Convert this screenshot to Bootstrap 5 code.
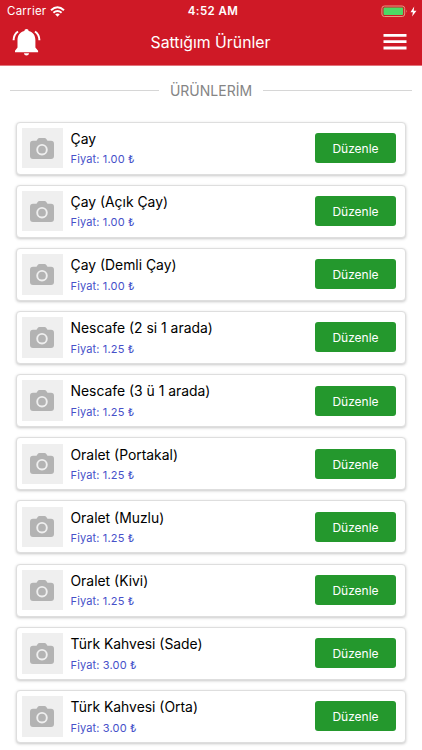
<!DOCTYPE html>
<html lang="tr">
<head>
<meta charset="utf-8">
<meta name="viewport" content="width=device-width, initial-scale=1">
<title>Sattığım Ürünler</title>
<link href="https://cdn.jsdelivr.net/npm/bootstrap@5.3.0/dist/css/bootstrap.min.css" rel="stylesheet">
<style>
body{font-family:Inter,"Liberation Sans",sans-serif;height:750px;overflow:hidden;background:#fff;color:#000}
.topbar{background:#cf1926;height:65.5px;border-bottom:1px solid #e2737b}
.status{height:21px;display:grid;grid-template-columns:1fr auto 1fr;padding:0 5px 0 7px;font-size:11.5px;line-height:21px}
.carrier{letter-spacing:.25px;padding-top:1px}
.clock{font-size:11.5px;font-weight:600;letter-spacing:.4px;padding:1px 0 0 2px}
.appbar{height:44px;display:grid;grid-template-columns:1fr auto 1fr;padding:0 15px 0 12px}
.heading{font-size:15.8px;line-height:44px;padding-left:2px}
.menu-icon{margin-top:-2.5px}
.section-title{height:15px;margin:17px 10px 0;font-size:14px;line-height:15px;color:#858585;gap:10.5px}
.rule{height:1px;background:#d6d6d6}
.items{padding:24px 16px 0;gap:10.17px}
.item{height:53px;border:1px solid #dedede;border-radius:4px;box-shadow:0 1px 3px rgba(0,0,0,.22);padding:0 9px 0 5px}
.thumb{width:40.5px;height:40.5px;background:#efefef}
.name{font-size:13.9px;line-height:20px}
.price{font-size:11px;line-height:16px;letter-spacing:.15px;color:#4651c9;margin-top:2.5px}
.edit{width:81px;height:30px;background:#24982d;color:#fff;font-size:12px;line-height:31px;border-radius:3px;padding:0;border:0}
</style>
<script src="https://cdn.jsdelivr.net/npm/bootstrap@5.3.0/dist/js/bootstrap.bundle.min.js"></script>
</head>
<body>
<svg class="d-none">
  <symbol id="camera" viewBox="0 0 24 21"><path fill="#b3b3b3" d="M3 2.800h3.500l1.200-1.900Q8.300 0 9.500 0h5q1.200 0 1.800.9l1.200 1.900H21q3 0 3 3V18q0 3-3 3H3q-3 0-3-3V5.800q0-3 3-3z"/><circle cx="12" cy="11.700" r="4.800" fill="#b3b3b3" stroke="#efefef" stroke-width="1.900"/></symbol>
</svg>
<header class="topbar text-white">
  <div class="status">
    <div class="d-flex align-items-center"><span class="carrier">Carrier</span>
      <svg class="ms-1" width="15" height="11" viewBox="0 0 15 11" fill="none" stroke="#fff" stroke-width="2"><path d="M1 4.200Q7.500-1.600 14 4.200M3.400 6.700Q7.500 3.200 11.600 6.700"/><path d="M5.200 8.300Q7.500 6.500 9.800 8.300L7.500 10.700z" fill="#fff" stroke="none"/></svg>
    </div>
    <div class="clock">4:52 AM</div>
    <div class="d-flex align-items-center justify-content-end">
      <svg width="36" height="13" viewBox="0 0 36 13"><rect x=".9" y="1" width="22.800" height="10.500" rx="2.500" fill="none" stroke="#e39a80"/><rect x="2.500" y="2.600" width="19.600" height="7.300" rx="1" fill="#4cd964"/><path d="M25 4.700q1.300 1.500 0 3z" fill="#e39a80"/><path d="M33.200 1.500 29.500 7.200h2.400l-.8 4.300 4.400-5.800h-2.800z" fill="#fff"/></svg>
    </div>
  </div>
  <div class="appbar align-items-center">
    <svg width="29" height="28" viewBox="0 0 29 28"><path fill="#fff" d="M14.500 0q2.100 0 2.200 2c4.600 1.200 6.700 4.600 6.700 9v7.500l2.700 3.200v1.500H3v-1.500l2.500-3.200V11C5.500 6.600 7.700 3.200 12.300 2q.1-2 2.200-2zM11.900 24.200h5.200q-.3 2.400-2.600 2.400t-2.600-2.400z"/><path fill="none" stroke="#fff" stroke-width="2" d="M6 2.500Q1.700 5.500 1.600 11.200M23 2.500q4.300 3 4.400 8.700"/></svg>
    <div class="heading">Sattığım Ürünler</div>
    <svg class="menu-icon ms-auto" width="24" height="18" viewBox="0 0 24 18" fill="#fff"><path d="M.5 1h23v2.800H.5zM.5 7.300h23v2.800H.5zM.5 13.600h23v2.800H.5z"/></svg>
  </div>
</header>
<main>
  <div class="section-title d-flex align-items-center"><span class="rule flex-fill"></span><span>ÜRÜNLERİM</span><span class="rule flex-fill"></span></div>
  <div class="items d-flex flex-column">
    <div class="item d-flex align-items-center bg-white flex-shrink-0"><div class="thumb d-flex align-items-center justify-content-center"><svg width="24" height="21"><use href="#camera"/></svg></div><div class="flex-fill ps-2"><div class="name">Çay</div><div class="price">Fiyat: 1.00 ₺</div></div><button class="btn edit">Düzenle</button></div>
    <div class="item d-flex align-items-center bg-white flex-shrink-0"><div class="thumb d-flex align-items-center justify-content-center"><svg width="24" height="21"><use href="#camera"/></svg></div><div class="flex-fill ps-2"><div class="name">Çay (Açık Çay)</div><div class="price">Fiyat: 1.00 ₺</div></div><button class="btn edit">Düzenle</button></div>
    <div class="item d-flex align-items-center bg-white flex-shrink-0"><div class="thumb d-flex align-items-center justify-content-center"><svg width="24" height="21"><use href="#camera"/></svg></div><div class="flex-fill ps-2"><div class="name">Çay (Demli Çay)</div><div class="price">Fiyat: 1.00 ₺</div></div><button class="btn edit">Düzenle</button></div>
    <div class="item d-flex align-items-center bg-white flex-shrink-0"><div class="thumb d-flex align-items-center justify-content-center"><svg width="24" height="21"><use href="#camera"/></svg></div><div class="flex-fill ps-2"><div class="name">Nescafe (2 si 1 arada)</div><div class="price">Fiyat: 1.25 ₺</div></div><button class="btn edit">Düzenle</button></div>
    <div class="item d-flex align-items-center bg-white flex-shrink-0"><div class="thumb d-flex align-items-center justify-content-center"><svg width="24" height="21"><use href="#camera"/></svg></div><div class="flex-fill ps-2"><div class="name">Nescafe (3 ü 1 arada)</div><div class="price">Fiyat: 1.25 ₺</div></div><button class="btn edit">Düzenle</button></div>
    <div class="item d-flex align-items-center bg-white flex-shrink-0"><div class="thumb d-flex align-items-center justify-content-center"><svg width="24" height="21"><use href="#camera"/></svg></div><div class="flex-fill ps-2"><div class="name">Oralet (Portakal)</div><div class="price">Fiyat: 1.25 ₺</div></div><button class="btn edit">Düzenle</button></div>
    <div class="item d-flex align-items-center bg-white flex-shrink-0"><div class="thumb d-flex align-items-center justify-content-center"><svg width="24" height="21"><use href="#camera"/></svg></div><div class="flex-fill ps-2"><div class="name">Oralet (Muzlu)</div><div class="price">Fiyat: 1.25 ₺</div></div><button class="btn edit">Düzenle</button></div>
    <div class="item d-flex align-items-center bg-white flex-shrink-0"><div class="thumb d-flex align-items-center justify-content-center"><svg width="24" height="21"><use href="#camera"/></svg></div><div class="flex-fill ps-2"><div class="name">Oralet (Kivi)</div><div class="price">Fiyat: 1.25 ₺</div></div><button class="btn edit">Düzenle</button></div>
    <div class="item d-flex align-items-center bg-white flex-shrink-0"><div class="thumb d-flex align-items-center justify-content-center"><svg width="24" height="21"><use href="#camera"/></svg></div><div class="flex-fill ps-2"><div class="name">Türk Kahvesi (Sade)</div><div class="price">Fiyat: 3.00 ₺</div></div><button class="btn edit">Düzenle</button></div>
    <div class="item d-flex align-items-center bg-white flex-shrink-0"><div class="thumb d-flex align-items-center justify-content-center"><svg width="24" height="21"><use href="#camera"/></svg></div><div class="flex-fill ps-2"><div class="name">Türk Kahvesi (Orta)</div><div class="price">Fiyat: 3.00 ₺</div></div><button class="btn edit">Düzenle</button></div>
  </div>
</main>
</body>
</html>
